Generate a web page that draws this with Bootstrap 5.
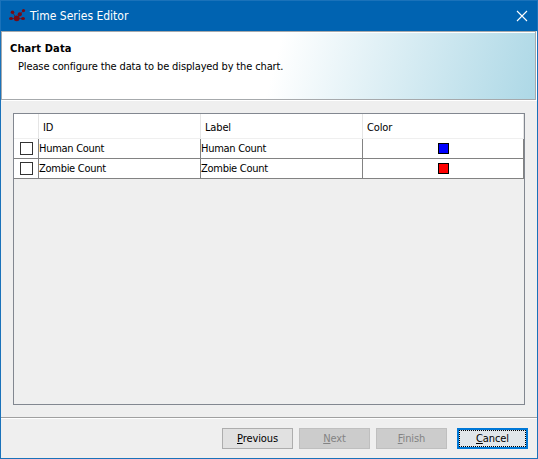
<!DOCTYPE html>
<html lang="en">
<head>
<meta charset="utf-8">
<title>Time Series Editor</title>
<link href="https://cdn.jsdelivr.net/npm/bootstrap@5.3.0/dist/css/bootstrap.min.css" rel="stylesheet">
<style>
body{font:11px/13px "DejaVu Sans Condensed","DejaVu Sans",sans-serif;font-stretch:condensed;color:#000;background:#efefef}
.window{height:459px;border:1px solid #1a72ba;background:#efefef}
.titlebar{height:30px;background:#0063b1;color:#fff;padding-left:8px;padding-right:9px;font-size:12px}
.titlebar .caption{margin-left:4px;letter-spacing:0}
.banner{height:69px;width:535px;border:1px solid #a6a9ac;box-shadow:inset 1px 1px #fff,1px 1px #fff;padding:10px 0 0 8px;background:linear-gradient(105deg,#fff 51%,#add8e6 100%)}
.banner h1{font-size:11px;line-height:13px;letter-spacing:.12px}
.banner p{margin-left:8px;margin-top:5px;letter-spacing:-.13px}
.grid-pane{margin:13px 12px 0;height:292px;border:1px solid #828790}
.data-grid{width:510px;table-layout:fixed;border-collapse:separate;border-spacing:0}
.data-grid th{height:25px;padding:2px 0 0 4px;font-weight:400;background:#fff;border-right:1px solid #e5e5e5;border-bottom:1px solid #efefef;letter-spacing:-.15px}
.data-grid td{height:20px;padding:0 0 1px;background:#fff;border-right:1px solid #828282;border-bottom:1px solid #828282;line-height:13px;letter-spacing:-.28px}
.data-grid .tick{width:13px;height:13px;border:1px solid #333;margin:1px 0 0 6px;display:block;background:#fff}
.swatch{width:11px;height:11px;border:1px solid #000;margin:1px auto 0}
.footer-bar{margin-top:12px;border-top:1px solid #a0a0a0;box-shadow:inset 0 1px #fff;padding:10px 9px 0 0;height:41px}
.btn-win{width:71px;height:21px;padding:0;border:1px solid #adadad;border-radius:0;background:#e1e1e1;color:#000;font-size:11px;line-height:17px;letter-spacing:-.1px}
.btn-win:disabled{background:#ccc;border-color:#bfbfbf;color:#838383;opacity:1}
.btn-focus{border:2px solid #0078d7;background:#e1e6ea;line-height:15px;outline:1px dotted #000;outline-offset:-3px;margin-left:4px}
</style>
</head>
<body>
<main class="window d-flex flex-column">
  <header class="titlebar d-flex align-items-center flex-shrink-0">
    <svg width="17" height="14" viewBox="0 0 17 14" fill="#780a14" stroke="#780a14" stroke-width="0.7"><path d="M3.5 3.5L7.5 9.5M14.5 1.5L7.5 9.5M2 9.5h12" fill="none"/><g stroke="none"><circle cx="3.5" cy="3.2" r="1.8"/><circle cx="14.5" cy="1.6" r="1.6"/><circle cx="10.8" cy="5.3" r="2.1"/><ellipse cx="2" cy="9.5" rx="2" ry="1.5"/><ellipse cx="14" cy="9.5" rx="2" ry="1.5"/><circle cx="7.7" cy="9.3" r="2.9"/></g></svg>
    <span class="caption">Time Series Editor</span>
    <svg class="ms-auto" width="12" height="12" viewBox="0 0 12 12"><path d="M1 1l10 10M11 1L1 11" stroke="#fff" stroke-width="1.1"/></svg>
  </header>
  <section class="banner flex-shrink-0">
    <h1 class="fw-bold mb-0">Chart Data</h1>
    <p class="mb-0">Please configure the data to be displayed by the chart.</p>
  </section>
  <section class="grid-pane flex-shrink-0">
    <table class="data-grid">
      <colgroup><col style="width:25px"><col style="width:162px"><col style="width:162px"><col style="width:161px"></colgroup>
      <thead><tr><th></th><th>ID</th><th>Label</th><th>Color</th></tr></thead>
      <tbody>
        <tr><td><span class="tick"></span></td><td>Human Count</td><td>Human Count</td><td><div class="swatch" style="background:#00f"></div></td></tr>
        <tr><td><span class="tick"></span></td><td>Zombie Count</td><td>Zombie Count</td><td><div class="swatch" style="background:#f00"></div></td></tr>
      </tbody>
    </table>
  </section>
  <footer class="footer-bar d-flex justify-content-end flex-shrink-0">
    <div class="d-flex" style="gap:6px">
      <button class="btn btn-win"><u>P</u>revious</button>
      <button class="btn btn-win" disabled><u>N</u>ext</button>
      <button class="btn btn-win" disabled><u>F</u>inish</button>
      <button class="btn btn-win btn-focus"><u>C</u>ancel</button>
    </div>
  </footer>
</main>
<script src="https://cdn.jsdelivr.net/npm/bootstrap@5.3.0/dist/js/bootstrap.bundle.min.js"></script>
</body>
</html>
